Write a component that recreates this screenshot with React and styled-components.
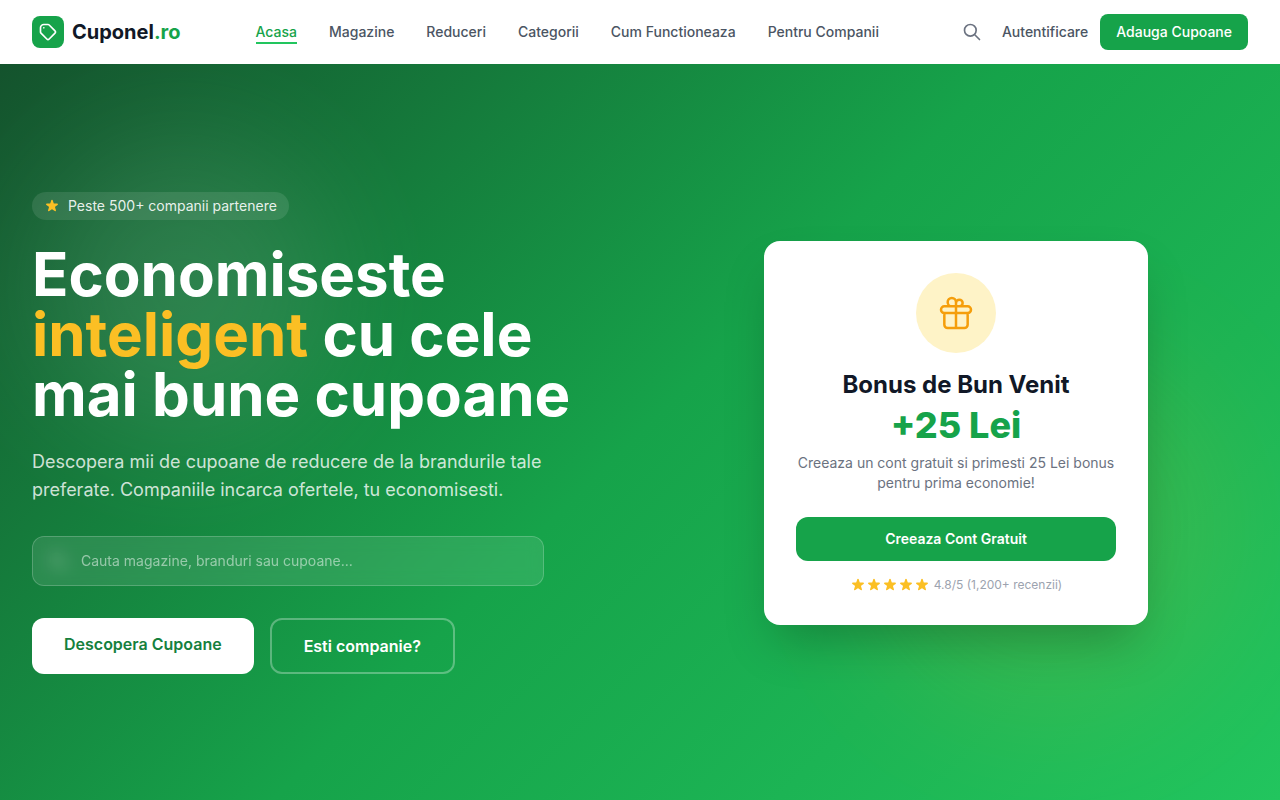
import styled, { createGlobalStyle } from 'styled-components'

const NAV_LINKS = [
  { label: 'Acasa', active: true },
  { label: 'Magazine' },
  { label: 'Reduceri' },
  { label: 'Categorii' },
  { label: 'Cum Functioneaza' },
  { label: 'Pentru Companii' },
]

function LineIcon({ d, size = 20, weight = 2 }) {
  return (
    <StLineIcon
      viewBox="0 0 24 24"
      width={size}
      height={size}
      strokeWidth={weight}
      aria-hidden="true"
    >
      <path d={d} />
    </StLineIcon>
  )
}

const TAG = 'M7 7h.01M7 3h5c.512 0 1.024.195 1.414.586l7 7a2 2 0 010 2.828l-7 7a2 2 0 01-2.828 0l-7-7A1.994 1.994 0 013 12V7a4 4 0 014-4z'
const SEARCH = 'M21 21l-6-6m2-5a7 7 0 11-14 0 7 7 0 0114 0z'
const GIFT = 'M12 8v13m0-13V6a2 2 0 112 2h-2zm0 0V5.5A2.5 2.5 0 109.5 8H12zm-7 4h14M5 12a2 2 0 110-4h14a2 2 0 110 4M5 12v7a2 2 0 002 2h10a2 2 0 002-2v-7'

function Star() {
  return (
    <StStar viewBox="0 0 20 20" aria-hidden="true">
      <path d="M9.049 2.927c.3-.921 1.603-.921 1.902 0l1.07 3.292a1 1 0 00.95.69h3.462c.969 0 1.371 1.24.588 1.81l-2.8 2.034a1 1 0 00-.364 1.118l1.07 3.292c.3.921-.755 1.688-1.54 1.118l-2.8-2.034a1 1 0 00-1.175 0l-2.8 2.034c-.784.57-1.838-.197-1.539-1.118l1.07-3.292a1 1 0 00-.364-1.118L2.98 8.72c-.783-.57-.38-1.81.588-1.81h3.461a1 1 0 00.951-.69l1.07-3.292z" />
    </StStar>
  )
}

function Header() {
  return (
    <StHeader>
      <StLogo href="#">
        <StLogoMark><LineIcon d={TAG} /></StLogoMark>
        <span>Cuponel<StLogoTld>.ro</StLogoTld></span>
      </StLogo>

      <StNav>
        {NAV_LINKS.map((link) => (
          <StNavLink key={link.label} href="#" $active={link.active}>
            {link.label}
          </StNavLink>
        ))}
      </StNav>

      <StActions>
        <StIconButton type="button" aria-label="Cauta">
          <LineIcon d={SEARCH} />
        </StIconButton>
        <StNavLink href="#">Autentificare</StNavLink>
        <StAddLink href="#">Adauga Cupoane</StAddLink>
      </StActions>
    </StHeader>
  )
}

function BonusCard() {
  return (
    <StCard>
      <StGiftCircle><LineIcon d={GIFT} size={40} weight={1.5} /></StGiftCircle>
      <StCardTitle>Bonus de Bun Venit</StCardTitle>
      <StAmount>+25 Lei</StAmount>
      <StCardText>
        Creeaza un cont gratuit si primesti 25 Lei bonus pentru prima economie!
      </StCardText>
      <StCardLink href="#">Creeaza Cont Gratuit</StCardLink>
      <StRating>
        <StStars>
          {[1, 2, 3, 4, 5].map((n) => <Star key={n} />)}
        </StStars>
        <span>4.8/5 (1,200+ recenzii)</span>
      </StRating>
    </StCard>
  )
}

function App() {
  return (
    <>
      <GlobalStyle />
      <Header />
      <StHero>
        <StGlowWhite />
        <StGlowAmber />
        <StHeroGrid>
          <div>
            <StBadge>
              <Star />
              <span>Peste 500+ companii partenere</span>
            </StBadge>
            <StTitle>
              Economiseste <StAccent>inteligent</StAccent> cu cele mai bune cupoane
            </StTitle>
            <StLead>
              Descopera mii de cupoane de reducere de la brandurile tale preferate.
              Companiile incarca ofertele, tu economisesti.
            </StLead>

            <StSearch role="search">
              <StSearchIcon><LineIcon d={SEARCH} /></StSearchIcon>
              <StSearchInput
                type="text"
                aria-label="Cauta cupoane"
                placeholder="Cauta magazine, branduri sau cupoane..."
              />
            </StSearch>

            <StButtons>
              <StPrimary href="#">Descopera Cupoane</StPrimary>
              <StOutline href="#">Esti companie?</StOutline>
            </StButtons>
          </div>
          <BonusCard />
        </StHeroGrid>
      </StHero>
    </>
  )
}


const GlobalStyle = createGlobalStyle`
  *, *::before, *::after {
    box-sizing: border-box;
  }
  body {
    margin: 0;
    font-family: Inter, "Liberation Sans", sans-serif;
    font-size: 14px;
    line-height: 20px;
    color: #111827;
    background: #fff;
  }
  a {
    text-decoration: none;
    color: inherit;
  }
  h1, h2, p {
    margin: 0;
  }
`

const StLineIcon = styled.svg`
  display: block;
  flex-shrink: 0;
  fill: none;
  stroke: currentColor;
  stroke-linecap: round;
  stroke-linejoin: round;
`

const StStar = styled.svg`
  display: block;
  flex-shrink: 0;
  width: 16px;
  height: 16px;
  fill: #fbbf24;
`

const StHeader = styled.header`
  position: sticky;
  top: 0;
  z-index: 10;
  display: flex;
  align-items: center;
  justify-content: space-between;
  height: 64px;
  padding: 0 32px;
  background: #fff;
`

const StLogo = styled.a`
  display: flex;
  align-items: center;
  gap: 8px;
  font-size: 20px;
  line-height: 28px;
  font-weight: 700;
`

const StLogoMark = styled.span`
  display: flex;
  align-items: center;
  justify-content: center;
  width: 32px;
  height: 32px;
  border-radius: 8px;
  color: #fff;
  background: #16a34a;
`

const StLogoTld = styled.span`
  color: #16a34a;
`

const StNav = styled.nav`
  display: flex;
  align-items: center;
  gap: 32px;
`

const StNavLink = styled.a`
  position: relative;
  font-weight: 500;
  color: ${(props) => (props.$active ? '#16a34a' : '#4b5563')};

  &::after {
    content: '';
    display: ${(props) => (props.$active ? 'block' : 'none')};
    position: absolute;
    left: 0;
    right: 0;
    bottom: -2px;
    height: 2px;
    background: #22c55e;
  }
`

const StActions = styled.div`
  display: flex;
  align-items: center;
  gap: 12px;
`

const StIconButton = styled.button`
  padding: 8px;
  border: 0;
  background: none;
  color: #6b7280;
  cursor: pointer;
`

const StAddLink = styled.a`
  padding: 8px 16px;
  border-radius: 8px;
  font-weight: 500;
  color: #fff;
  background: #16a34a;
`

const StHero = styled.section`
  position: relative;
  overflow: hidden;
  padding: 128px 32px;
  background: linear-gradient(135deg, #14532d 0%, #16a34a 50%, #22c55e 100%);
`

const StGlow = styled.div`
  position: absolute;
  border-radius: 50%;
  filter: blur(64px);
  opacity: 0.1;
`

const StGlowWhite = styled(StGlow)`
  top: 80px;
  left: 40px;
  width: 288px;
  height: 288px;
  background: #fff;
`

const StGlowAmber = styled(StGlow)`
  right: 40px;
  bottom: 80px;
  width: 384px;
  height: 384px;
  background: #fbbf24;
`

const StHeroGrid = styled.div`
  position: relative;
  display: grid;
  grid-template-columns: 1fr 1fr;
  align-items: center;
  gap: 48px;
  max-width: 1216px;
  margin: 0 auto;
`

const StBadge = styled.div`
  display: flex;
  align-items: center;
  gap: 8px;
  width: fit-content;
  margin-bottom: 24px;
  padding: 4px 12px;
  border-radius: 14px;
  color: rgba(255, 255, 255, 0.9);
  background: rgba(255, 255, 255, 0.1);
`

const StTitle = styled.h1`
  margin-bottom: 24px;
  font-size: 60px;
  line-height: 60px;
  font-weight: 700;
  color: #fff;
`

const StAccent = styled.span`
  color: #fbbf24;
`

const StLead = styled.p`
  max-width: 512px;
  margin-bottom: 32px;
  font-size: 18px;
  line-height: 28px;
  color: rgba(255, 255, 255, 0.8);
`

const StSearch = styled.form`
  position: relative;
  max-width: 512px;
  margin-bottom: 32px;
`

const StSearchIcon = styled.span`
  position: absolute;
  top: 15px;
  left: 16px;
  color: rgba(255, 255, 255, 0.5);
`

const StSearchInput = styled.input`
  position: relative;
  display: block;
  width: 100%;
  padding: 14px 16px 14px 48px;
  border: 1px solid rgba(255, 255, 255, 0.2);
  border-radius: 12px;
  font: inherit;
  color: #fff;
  background: rgba(255, 255, 255, 0.1);
  backdrop-filter: blur(8px);

  &::placeholder {
    color: rgba(255, 255, 255, 0.5);
  }
`

const StButtons = styled.div`
  display: flex;
  gap: 16px;
`

const StHeroLink = styled.a`
  padding: 14px 32px;
  border-radius: 12px;
  font-size: 16px;
  line-height: 24px;
  font-weight: 600;
`

const StPrimary = styled(StHeroLink)`
  color: #15803d;
  background: #fff;
`

const StOutline = styled(StHeroLink)`
  border: 2px solid rgba(255, 255, 255, 0.3);
  color: #fff;
`

const StCard = styled.div`
  justify-self: center;
  width: 100%;
  max-width: 384px;
  padding: 32px;
  border-radius: 16px;
  text-align: center;
  background: #fff;
  box-shadow: 0 25px 50px -12px rgba(0, 0, 0, 0.25);
`

const StGiftCircle = styled.div`
  display: flex;
  align-items: center;
  justify-content: center;
  width: 80px;
  height: 80px;
  margin: 0 auto 16px;
  border-radius: 50%;
  color: #f59e0b;
  background: #fef3c7;
`

const StCardTitle = styled.h2`
  margin-bottom: 4px;
  font-size: 24px;
  line-height: 32px;
  font-weight: 700;
`

const StAmount = styled.p`
  margin-bottom: 8px;
  font-size: 36px;
  line-height: 40px;
  font-weight: 800;
  color: #16a34a;
`

const StCardText = styled.p`
  margin-bottom: 24px;
  color: #6b7280;
`

const StCardLink = styled.a`
  display: block;
  padding: 12px;
  border-radius: 12px;
  font-weight: 600;
  color: #fff;
  background: #16a34a;
`

const StRating = styled.div`
  display: flex;
  align-items: center;
  justify-content: center;
  gap: 4px;
  margin-top: 16px;
  font-size: 12px;
  line-height: 16px;
  color: #9ca3af;
`

const StStars = styled.div`
  display: flex;
`


export default App
